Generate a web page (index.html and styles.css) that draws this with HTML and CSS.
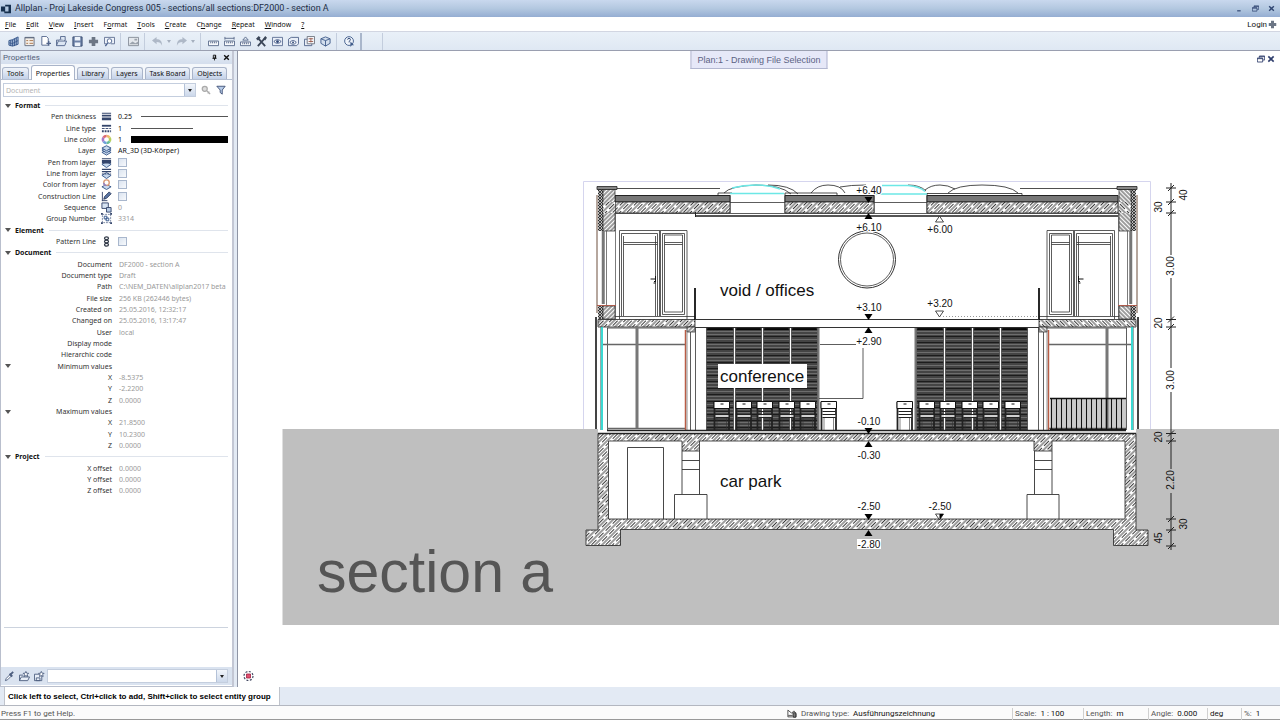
FILE: index.html
```html
<!DOCTYPE html>
<html lang="en">
<head>
<meta charset="utf-8">
<title>Allplan - Proj Lakeside Congress 005</title>
<link rel="stylesheet" href="styles.css">
</head>
<body>
<svg class="defs" aria-hidden="true">
  <symbol id="i-logo" viewBox="0 0 12 12"><path d="M0 3h5v6H0zM5 1h7v10H4V9h5V3H5z" fill="#17304f"/></symbol>
  <symbol id="i-building" viewBox="0 0 12 12"><path d="M1 5l4-1v7l-4-1zM5 4l6-3v8l-6 2M3 4.500V11M7 3v8M9 2v8M1 7.500l4 .5 6-3" fill="#a9bedb" stroke="#34558a"/></symbol>
  <symbol id="i-form" viewBox="0 0 12 12"><path d="M1 1.500h10v9H1z" fill="#f4efe8" stroke="#666f80"/><path d="M1 2h10" stroke="#53607a"/><path d="M2.500 5h2M6 5h4M2.500 8h2M6 8h4" stroke="#a77247"/></symbol>
  <symbol id="i-new" viewBox="0 0 12 12"><path d="M2 .5h5l2 2V10H2z" fill="#fff" stroke="#52658b"/><path d="M7 8h5M9.500 5.500v5" stroke="#52658b" stroke-width="1.500"/></symbol>
  <symbol id="i-open" viewBox="0 0 12 12"><path d="M.5 10.500v-6h3l1-1h5v2" fill="none" stroke="#52658b"/><path d="M.5 10.500l2-5h9l-2 5zM5 3.500v-3h5v4" fill="#dce6f3" stroke="#52658b"/></symbol>
  <symbol id="i-save" viewBox="0 0 12 12"><path d="M1 1h10v10H1z" fill="#6e83a8" stroke="#34496e"/><path d="M3 1h6v4H3zM3 7h6v4H3z" fill="#edf3fa"/></symbol>
  <symbol id="i-plus" viewBox="0 0 12 12"><path d="M4 1h4v3h3v4H8v3H4V8H1V4h3z" fill="#6c7685"/></symbol>
  <symbol id="i-preview" viewBox="0 0 12 12"><path d="M2.500 8.500H.5v-7h11v7h-4" fill="#eef3fa" stroke="#617294"/><circle cx="6" cy="5.500" r="2.500" fill="#fff" stroke="#4b628e"/><path d="M4 7.500L1.500 11" stroke="#4b628e" stroke-width="1.500"/></symbol>
  <symbol id="i-image" viewBox="0 0 12 12"><path d="M.5 1.500h11v9H.5z" fill="#e4e8ed" stroke="#858d98"/><path d="M1 9l4-3 3 2 3-2v3H1zM7 3h3v2H7z" fill="#9ba3ad"/></symbol>
  <symbol id="i-undo" viewBox="0 0 12 12"><path d="M0 5l5-4v2.500c4 0 6 2 6 7-1-3-3-4-6-4V9z" fill="#aeb8c7"/></symbol>
  <symbol id="i-redo" viewBox="0 0 12 12"><path d="M12 5L7 1v2.500c-4 0-6 2-6 7 1-3 3-4 6-4V9z" fill="#aeb8c7"/></symbol>
  <symbol id="i-ruler" viewBox="0 0 12 12"><path d="M.5 5.500h11v5H.5z" fill="#f7f9fc" stroke="#59698a"/><path d="M3 6v2M5 6v2M7 6v2M9 6v2" stroke="#59698a"/></symbol>
  <symbol id="i-measure" viewBox="0 0 12 12"><path d="M.5 5.500h11v5H.5z" fill="#f7f9fc" stroke="#59698a"/><path d="M3 6v2M5 6v2M7 6v2M9 6v2M1 2.500h10M1 1v3M11 1v3" stroke="#59698a"/></symbol>
  <symbol id="i-area" viewBox="0 0 12 12"><path d="M.5 6.500h11v4H.5z" fill="#f7f9fc" stroke="#59698a"/><path d="M3 7v2M5 7v2M7 7v2M9 7v2M3 4.500L6 1l3 3.500z" fill="none" stroke="#59698a"/></symbol>
  <symbol id="i-tools" viewBox="0 0 12 12"><path d="M2 2l8 9M10 2l-8 9" stroke="#3b4658" stroke-width="2"/><path d="M0 3l3-3 2 2-3 3zM8 3l2-3 2 2-2 3z" fill="#3b4658"/></symbol>
  <symbol id="i-eye" viewBox="0 0 12 12"><path d="M.5 1.500h11v9H.5z" fill="#e8eef7" stroke="#5e7195"/><path d="M2 6q4-4 8 0-4 4-8 0z" fill="#fff" stroke="#3f5684"/><circle cx="6" cy="6" r="1.500" fill="#2d4676"/></symbol>
  <symbol id="i-eyefolder" viewBox="0 0 12 12"><path d="M.5 10.500v-7l3-2h8v7l-2 2z" fill="#e8eef7" stroke="#52658b"/><path d="M2 7q3.500-4 7 0-3.500 4-7 0z" fill="#fff" stroke="#3f5684"/><circle cx="5.500" cy="7" r="1" fill="#2d4676"/></symbol>
  <symbol id="i-windows" viewBox="0 0 12 12"><path d="M.5 3.500h8v7h-8z" fill="#e8eef7" stroke="#52658b"/><path d="M3.500.5h8v8h-8z" fill="#f5f7fb" stroke="#70757f"/><path d="M5 3h5M5 6h5M7.500 2v5" stroke="#9a5e50"/></symbol>
  <symbol id="i-cube" viewBox="0 0 12 12"><path d="M1 3l5-2 5 2v5l-5 3-5-3z" fill="#d2deed" stroke="#405c8b"/><path d="M1 3l5 2 5-2M6 5v6" fill="none" stroke="#405c8b"/></symbol>
  <symbol id="i-help" viewBox="0 0 12 12"><circle cx="5.500" cy="5.500" r="4.800" fill="#eef3fa" stroke="#405c8b"/><path d="M4 4q0-1.500 1.500-1.500T7 4q0 1-1.500 2v1" fill="none" stroke="#26406f"/><path d="M7 6l4 4H8.500L7 12z" fill="#405c8b"/></symbol>
  <symbol id="i-pen" viewBox="0 0 12 12"><path d="M1 2h10v1H1zM1 4h10v2H1zM1 7h10v3H1z" fill="#34456b"/></symbol>
  <symbol id="i-linetype" viewBox="0 0 12 12"><path d="M1 2h10v2H1z" fill="#34456b"/><path d="M1 6h10" stroke="#34456b" stroke-dasharray="3 1"/><path d="M1 9h10" stroke="#34456b" stroke-width="2" stroke-dasharray="2 1"/></symbol>
  <symbol id="i-wheel" viewBox="0 0 12 12"><g fill="none" stroke-width="3.500"><path d="M6 2.500A3.500 3.500 0 0 1 9 4.200" stroke="#efb96a"/><path d="M9 4.200A3.500 3.500 0 0 1 9 7.800" stroke="#b8d15f"/><path d="M9 7.800A3.500 3.500 0 0 1 6 9.500" stroke="#68bd9b"/><path d="M6 9.500A3.500 3.500 0 0 1 3 7.800" stroke="#6e9edb"/><path d="M3 7.800A3.500 3.500 0 0 1 3 4.200" stroke="#a77bc9"/><path d="M3 4.200A3.500 3.500 0 0 1 6 2.500" stroke="#dc6a73"/></g><circle cx="6" cy="6" r="2.500" fill="#fff"/></symbol>
  <symbol id="i-layers" viewBox="0 0 12 12"><g fill="#c7d8ed" stroke="#34558a"><path d="M6 5.500l5 2.500-5 3-5-3z"/><path d="M6 3l5 2.500-5 3-5-3z"/><path d="M6 .8l5 2.500-5 3-5-3z"/></g></symbol>
  <symbol id="i-penlayer" viewBox="0 0 12 12"><path d="M6 5l5 3-5 3.500L1 8z" fill="#c7d8ed" stroke="#34558a"/><path d="M1 1h10v1H1zM1 3h10v4H1z" fill="#34456b"/></symbol>
  <symbol id="i-linelayer" viewBox="0 0 12 12"><path d="M6 5l5 3-5 3.500L1 8z" fill="#c7d8ed" stroke="#34558a"/><path d="M1 1.500h10M1 4h10" stroke="#34456b" stroke-width="1.500"/><path d="M1 6.500h10" stroke="#34456b" stroke-dasharray="2 1"/></symbol>
  <symbol id="i-colorlayer" viewBox="0 0 12 12"><path d="M6 6l5 2.500-5 3-5-3z" fill="#c7d8ed" stroke="#34558a"/><circle cx="6" cy="4" r="3" fill="#fff" stroke="#d99a76" stroke-width="1.500"/><path d="M3 4a3 3 0 0 0 3 3" fill="none" stroke="#8d82c6" stroke-width="1.500"/></symbol>
  <symbol id="i-pencil" viewBox="0 0 12 12"><path d="M1.500 1v10M1 10.500h6" stroke="#34456b"/><path d="M3 9l1-3 5-5 2 2-5 5z" fill="#5c77a6" stroke="#26375b"/></symbol>
  <symbol id="i-sequence" viewBox="0 0 12 12"><path d="M1 1h7v6H1z" fill="#d6e3f2" stroke="#34456b"/><path d="M6 6h5v5H6z" fill="#b7cbe5" stroke="#34456b"/></symbol>
  <symbol id="i-group" viewBox="0 0 12 12"><path d="M1.500 1.500h9v9h-9z" fill="none" stroke="#7482a0" stroke-dasharray="2 1"/><path d="M3.500 3.500h3v3h-3zM5.500 5.500h3v3h-3z" fill="#eef3fa" stroke="#34558a"/><path d="M0 0h2v2H0zM10 0h2v2h-2zM0 10h2v2H0zM10 10h2v2h-2z" fill="#34456b"/></symbol>
  <symbol id="i-chain" viewBox="0 0 12 12"><g fill="none" stroke="#333b49" stroke-width="1.300"><ellipse cx="6" cy="2.500" rx="2.200" ry="1.500"/><ellipse cx="6" cy="6" rx="2.200" ry="1.500"/><ellipse cx="6" cy="9.500" rx="2.200" ry="1.500"/></g></symbol>
  <symbol id="i-key" viewBox="0 0 12 12"><circle cx="4.500" cy="4.500" r="3" fill="#ddd" stroke="#aaa" stroke-width="1.500"/><path d="M6.500 6.500L11 11M8 10l2-2" stroke="#aaa" stroke-width="1.500"/></symbol>
  <symbol id="i-filter" viewBox="0 0 12 12"><path d="M1 1.500h10L7.500 6v5L5 9V6z" fill="#b6cbe8" stroke="#34456b"/></symbol>
  <symbol id="i-pipette" viewBox="0 0 12 12"><path d="M1.500 10.500l1-2.500 4-4 1.500 1.500-4 4z" fill="#fff" stroke="#4e5f80"/><path d="M6 3l3 3M7 4l3-3" stroke="#4e5f80" stroke-width="2"/></symbol>
  <symbol id="i-favopen" viewBox="0 0 12 12"><path d="M.5 10.500v-6h4M.5 10.500l2-4h9l-2 4z" fill="#e8eef7" stroke="#4e5f80"/><path d="M7.500.5l1 2h2L9 4l.5 2-2-1-2 1L6 4 4.500 2.500h2z" fill="#fff" stroke="#4e5f80"/></symbol>
  <symbol id="i-favsave" viewBox="0 0 12 12"><path d="M.5 3.500h8v7h-8zM2.500 7.500h4v3h-4z" fill="#e8eef7" stroke="#4e5f80"/><path d="M8 .5l1 2h2L9.500 4l.5 2-2-1-2 1 .5-2L5 2.500h2z" fill="#fff" stroke="#4e5f80"/></symbol>
  <symbol id="i-pin" viewBox="0 0 12 12"><path d="M4 2h4v5H4zM2.500 7.500h7M6 7v4" fill="none" stroke="#111" stroke-width="1.500"/><path d="M6.500 2h2v5h-2z" fill="#111"/></symbol>
  <symbol id="i-close" viewBox="0 0 12 12"><path d="M2 2l8 8M10 2l-8 8" stroke="currentColor" stroke-width="2.400"/></symbol>
  <symbol id="i-restore" viewBox="0 0 12 12"><path d="M3.500 4V1.500h8v6H9M.5 4.500h8v6h-8zM.5 5.500h8M3.500 2.500h8" fill="none" stroke="currentColor" stroke-width="1.300"/></symbol>
  <symbol id="i-min" viewBox="0 0 12 12"><path d="M2 9h6v2H2z" fill="currentColor"/></symbol>
  <symbol id="i-sheet" viewBox="0 0 12 12"><path d="M.5 10.500v-9l5 4 3-3 3 4v4z" fill="#fff" stroke="#222"/><path d="M1 8.500h6M7 5h4v6H8z" fill="#777" stroke="#222"/></symbol>
</svg>

<header>
  <div class="titlebar">
    <svg class="logo"><use href="#i-logo"/></svg>
    <h1>Allplan - Proj Lakeside Congress 005 - sections/all sections:DF2000 - section A</h1>
    <div class="winbtns">
      <button aria-label="Minimize"><svg><use href="#i-min"/></svg></button>
      <button aria-label="Restore"><svg><use href="#i-restore"/></svg></button>
      <button aria-label="Close"><svg><use href="#i-close"/></svg></button>
    </div>
  </div>
  <nav class="menubar">
    <button><u>F</u>ile</button><button><u>E</u>dit</button><button><u>V</u>iew</button><button><u>I</u>nsert</button><button>F<u>o</u>rmat</button><button><u>T</u>ools</button><button><u>C</u>reate</button><button>C<u>h</u>ange</button><button><u>R</u>epeat</button><button><u>W</u>indow</button><button><u>?</u></button>
    <button class="login">Login <svg><use href="#i-plus"/></svg></button>
  </nav>
  <div class="toolbar" role="toolbar">
    <button aria-label="Project"><svg><use href="#i-building"/></svg></button>
    <button aria-label="Drawing files"><svg><use href="#i-form"/></svg></button>
    <button aria-label="New"><svg><use href="#i-new"/></svg></button>
    <button aria-label="Open"><svg><use href="#i-open"/></svg></button>
    <button aria-label="Save"><svg><use href="#i-save"/></svg></button>
    <button aria-label="Add"><svg><use href="#i-plus"/></svg></button>
    <button aria-label="Preview"><svg><use href="#i-preview"/></svg></button>
    <i class="sep"></i>
    <button aria-label="Image"><svg><use href="#i-image"/></svg></button>
    <i class="sep"></i>
    <button aria-label="Undo"><svg><use href="#i-undo"/></svg></button>
    <button class="caret pale" aria-label="Undo list"></button>
    <button aria-label="Redo"><svg><use href="#i-redo"/></svg></button>
    <button class="caret pale" aria-label="Redo list"></button>
    <i class="sep"></i>
    <button aria-label="Ruler"><svg><use href="#i-ruler"/></svg></button>
    <button aria-label="Measure"><svg><use href="#i-measure"/></svg></button>
    <button aria-label="Area"><svg><use href="#i-area"/></svg></button>
    <button aria-label="Tools"><svg><use href="#i-tools"/></svg></button>
    <button aria-label="Show"><svg><use href="#i-eye"/></svg></button>
    <button aria-label="Show files"><svg><use href="#i-eyefolder"/></svg></button>
    <button aria-label="Windows"><svg><use href="#i-windows"/></svg></button>
    <button aria-label="3D view"><svg><use href="#i-cube"/></svg></button>
    <i class="sep"></i>
    <button aria-label="Help"><svg><use href="#i-help"/></svg></button>
    <i class="sep grip"></i><i class="sep last"></i>
  </div>
</header>

<main>
  <aside>
    <div class="panel-head"><h2>Properties</h2>
      <button aria-label="Pin"><svg><use href="#i-pin"/></svg></button>
      <button aria-label="Close panel"><svg><use href="#i-close"/></svg></button>
    </div>
    <div class="tabs" role="tablist">
      <button role="tab">Tools</button><button role="tab" class="on" aria-selected="true">Properties</button><button role="tab">Library</button><button role="tab">Layers</button><button role="tab">Task Board</button><button role="tab">Objects</button>
    </div>
    <div class="filter">
      <div class="combo"><input type="text" aria-label="Element type" placeholder="Document"><button class="caret" aria-label="Show types"></button></div>
      <button aria-label="Match"><svg><use href="#i-key"/></svg></button>
      <button aria-label="Filter"><svg><use href="#i-filter"/></svg></button>
    </div>
    <div class="props">
      <h3>Format</h3>
      <div class="row"><span>Pen thickness</span><svg><use href="#i-pen"/></svg><b class="line-v">0.25<i class="ln"></i></b></div>
      <div class="row"><span>Line type</span><svg><use href="#i-linetype"/></svg><b class="line-v">1<i class="ln short"></i></b></div>
      <div class="row"><span>Line color</span><svg><use href="#i-wheel"/></svg><b class="line-v">1<i class="ln swatch"></i></b></div>
      <div class="row"><span>Layer</span><svg><use href="#i-layers"/></svg><b>AR_3D (3D-Körper)</b></div>
      <div class="row"><label for="c1">Pen from layer</label><svg><use href="#i-penlayer"/></svg><input type="checkbox" id="c1"></div>
      <div class="row"><label for="c2">Line from layer</label><svg><use href="#i-linelayer"/></svg><input type="checkbox" id="c2"></div>
      <div class="row"><label for="c3">Color from layer</label><svg><use href="#i-colorlayer"/></svg><input type="checkbox" id="c3"></div>
      <div class="row"><label for="c4">Construction Line</label><svg><use href="#i-pencil"/></svg><input type="checkbox" id="c4"></div>
      <div class="row"><span>Sequence</span><svg><use href="#i-sequence"/></svg><em>0</em></div>
      <div class="row"><span>Group Number</span><svg><use href="#i-group"/></svg><em>3314</em></div>
      <h3>Element</h3>
      <div class="row"><label for="c5">Pattern Line</label><svg><use href="#i-chain"/></svg><input type="checkbox" id="c5"></div>
      <h3>Document</h3>
      <div class="row wide"><span>Document</span><em>DF2000 - section A</em></div>
      <div class="row wide"><span>Document type</span><em>Draft</em></div>
      <div class="row wide"><span>Path</span><em>C:\NEM_DATEN\allplan2017 beta</em></div>
      <div class="row wide"><span>File size</span><em>256 KB (262446 bytes)</em></div>
      <div class="row wide"><span>Created on</span><em>25.05.2016, 12:32:17</em></div>
      <div class="row wide"><span>Changed on</span><em>25.05.2016, 13:17:47</em></div>
      <div class="row wide"><span>User</span><em>local</em></div>
      <div class="row wide"><span>Display mode</span></div>
      <div class="row wide"><span>Hierarchic code</span></div>
      <div class="row wide open"><span>Minimum values</span></div>
      <div class="row wide"><span>X</span><em>-8.5375</em></div>
      <div class="row wide"><span>Y</span><em>-2.2200</em></div>
      <div class="row wide"><span>Z</span><em>0.0000</em></div>
      <div class="row wide open"><span>Maximum values</span></div>
      <div class="row wide"><span>X</span><em>21.8500</em></div>
      <div class="row wide"><span>Y</span><em>10.2300</em></div>
      <div class="row wide"><span>Z</span><em>0.0000</em></div>
      <h3>Project</h3>
      <div class="row wide"><span>X offset</span><em>0.0000</em></div>
      <div class="row wide"><span>Y offset</span><em>0.0000</em></div>
      <div class="row wide"><span>Z offset</span><em>0.0000</em></div>
    </div>
    <div class="note"></div>
    <div class="favs">
      <button aria-label="Pick up"><svg><use href="#i-pipette"/></svg></button>
      <button aria-label="Load favorite"><svg><use href="#i-favopen"/></svg></button>
      <button aria-label="Save favorite"><svg><use href="#i-favsave"/></svg></button>
      <div class="combo"><input type="text" aria-label="Favorite"><button class="caret" aria-label="Show favorites"></button></div>
    </div>
  </aside>

  <section class="view">
    <svg class="plan" viewBox="238 51 1042 636" role="img" aria-label="Section A">
      <defs>
        <pattern id="hatch" width="5" height="10" patternUnits="userSpaceOnUse" patternTransform="rotate(45)">
          <rect width="5" height="10" fill="#fff"/><path d="M1 0v10M3.500 0v7" stroke="#222" stroke-width=".9"/>
        </pattern>
        <pattern id="wallhatch" width="3" height="3" patternUnits="userSpaceOnUse" patternTransform="rotate(45)">
          <rect width="3" height="3" fill="#fff"/><path d="M1 0v3" stroke="#222" stroke-width=".9"/>
        </pattern>
        <pattern id="insul" width="3" height="3" patternUnits="userSpaceOnUse">
          <rect width="3" height="3" fill="#bbb"/><path d="M0 0l3 3M3 0L0 3" stroke="#222" stroke-width=".8"/>
        </pattern>
        <pattern id="louver" width="30" height="13" patternUnits="userSpaceOnUse">
          <rect width="30" height="13" fill="#444"/><path d="M0 1.500h30M0 8.500h30" stroke="#1c1c1c"/><path d="M0 3.500h30M0 6.500h30M0 11.500h30" stroke="#777" stroke-width=".8"/>
        </pattern>
        <pattern id="bars" x="1050" width="5" height="32" patternUnits="userSpaceOnUse"><path d="M1.500 0v32" stroke="#111" stroke-width="1.500"/><path d="M4 0v32" stroke="#666" stroke-width=".7"/></pattern>
        <g id="chair"><path d="M1.500 1v29M16 1v29" stroke="#222" stroke-width="1.800"/><path d="M1 .5h15.500v7H1z" fill="#fff" stroke="#111"/><path d="M7.500 3h3" stroke="#111"/><path d="M2.500 10.500h13" stroke="#222"/><path d="M2.500 15h13" stroke="#fff" stroke-width="1.500"/><path d="M2.500 13.500h13M2.500 16.500h13" stroke="#222"/><path d="M4 17v12M13.500 17v12" stroke="#333" stroke-width=".6"/></g>
        <g id="down"><path d="M-4 0h8l-4 6z"/></g>
        <g id="up"><path d="M-4 6h8L0 0z"/></g>
        <g id="tick"><path d="M-5 0H5M-3 3L3-3" stroke="#222"/></g>
        <g id="panels"><path d="M0 0h27v102H0zM29 0h26v102H29zM57 0h26v102H57zM85 0h26v102H85z" fill="url(#louver)" stroke="#222" stroke-width=".6"/><path d="M1 1h25M30 1h24M58 1h24M86 1h24" stroke="#000" stroke-width="1.500"/></g>
        <g id="wing">
          <path d="M583.500 429V181.500H868" fill="none" stroke="#d5d5ee"/>
          <path d="M597 195v118" stroke="#b6a79e" stroke-width="2"/>
          <path d="M598 189h5v42h-5zM598 306h5v13h-5z" fill="url(#insul)"/>
          <path d="M603 189h12v42h-12zM603 306h12v13h-12z" fill="url(#wallhatch)" stroke="#222" stroke-width=".7"/>
          <path d="M597 186.500h20v3h-20z" fill="#888" stroke="#222" stroke-width=".8"/>
          <path d="M603 202h12v11h-12z" fill="url(#hatch)"/>
          <path d="M602.500 231v73M604 231v73" stroke="#777" stroke-width="1.500"/>
          <path d="M606.500 231v75M615.500 213v106" stroke="#444" stroke-width=".7"/>
          <path d="M597 305.500h19" stroke="#ad5b4c"/>
          <g fill="none" stroke="#333" stroke-width=".8">
            <path d="M619.500 319V230.500h67.500V319M615 316.500h80M621.500 316V233.500h36V316M623.500 242.500h34M623.500 244.500h34M623.500 236v80M655.500 236v80M659.500 231v85M660.500 231v85M662.500 233.500h22v81h-22zM664.500 235h18v77h-18zM664.500 242.500h18M664.500 244.500h18"/>
          </g>
          <path d="M650.500 279h5M654 281.500h2M653.500 283h2M655.500 276v6" stroke="#111"/>
          <path d="M598 319.500h97v7.500h-97z" fill="url(#hatch)" stroke="#222" stroke-width=".8"/>
          <path d="M687 327h8v5h-8z" fill="url(#wallhatch)" stroke="#222" stroke-width=".7"/>
          <path d="M695 288v32" stroke="#111" stroke-width="1.800"/>
          <path d="M596 317v112" stroke="#444" stroke-width="2"/>
          <path d="M695.500 327v103M607.500 328v102M607 328h80M690.500 332v98" stroke="#333" stroke-width=".8"/>
          <path d="M603 344.500h82M607 428.500h78" stroke="#666" stroke-width="1.500"/>
          <path d="M602 327v103" stroke="#25d5cf" stroke-width="1.800"/><path d="M600.500 327v103" stroke="#54706f" stroke-width=".6"/>
          <path d="M685.500 330v100" stroke="#b85c45" stroke-width="1.500"/><path d="M687 330v100" stroke="#777" stroke-width=".8"/>
        </g>
      </defs>

      <path d="M282.500 429H1279v196H282.500z" fill="#bfbfbf"/>
      <path d="M598 427h538v103H598zM598 188h538v242H598z" fill="#fff"/>

      <g fill="none" stroke="#222" stroke-width=".8">
        <path d="M617 188.500h103M1020 188.500h98"/>
        <path d="M718 195v-2h14M785 193h52v2M927 193.500h95v2"/>
        <path d="M724 193q6-7 32-8 25 0 35 9M768 185q22 0 30 9M811 193q6-8 17-8 13 0 17 8M840 187q10-2 26-2M908 185q12 0 18 6M925 190q6-5 15-5 8 0 15 4M948 193q8-8 34-8 28 0 36 8"/>
        <path d="M730 195v18M785 193v20M874 195v18M927 193v20"/>
      </g>
      <path d="M730 193.500h54M732 188q12-3 24-3 14 0 24 4M874 194h53M882 185.500h26q12 1 17 6" fill="none" stroke="#6ce8e6" stroke-width="1.500"/>
      <path d="M615 195.500h115v6.500H615zM785 195.500h89v6.500h-89zM927 195.500h191v6.500H927z" fill="#777" stroke="#222"/>
      <path d="M615 202h115v11H615zM785 202h89v11h-89zM927 202h191v11H927z" fill="url(#hatch)" stroke="#222" stroke-width=".8"/>
      <path d="M615 213.500h504M730 202.500h55M874 202.500h53" stroke="#333" stroke-width=".8"/>
      <path d="M695 216h423" stroke="#555" stroke-width="1.800"/><path d="M695.500 212v5" stroke="#222"/>

      <use href="#wing"/>
      <use href="#wing" transform="translate(1734) scale(-1 1)"/>
      <path d="M637 328v100M1107 328v100" stroke="#777" stroke-width="3"/>
      <path d="M695 319.500h344M695 327.500h344" stroke="#333"/>
      <path d="M943 316.500h94" stroke="#999" stroke-dasharray="1 2"/>
      <circle cx="867" cy="259.500" r="28.500" fill="none" stroke="#333"/><circle cx="867" cy="259.500" r="26.500" fill="none" stroke="#333" stroke-width=".8"/>

      <use href="#panels" x="706.500" y="328"/><use href="#panels" x="916.500" y="328"/>
      <path d="M818.500 328v102M915.500 328v102" stroke="#777" stroke-width="2"/>
      <path d="M820 344.500h36M863 348v50.500h-44" fill="none" stroke="#333" stroke-width=".8"/>
      <use href="#chair" x="713" y="401"/><use href="#chair" x="735" y="401"/><use href="#chair" x="756" y="401"/><use href="#chair" x="778" y="401"/><use href="#chair" x="799" y="401"/><use href="#chair" x="820" y="401"/>
      <use href="#chair" x="896" y="401"/><use href="#chair" x="918" y="401"/><use href="#chair" x="939" y="401"/><use href="#chair" x="961" y="401"/><use href="#chair" x="982" y="401"/><use href="#chair" x="1004" y="401"/>
      <path d="M1050 398h76v32h-76z" fill="url(#bars)"/><path d="M1050 398.500h76M1050 429.500h76" stroke="#111" stroke-width="1.500"/>

      <path d="M607 430.500h519" stroke="#222" stroke-width="1.500"/>
      <path d="M598 433.500h538V530h12v15.500h-34.500V529.500H620.500v16H586V530h12zM608.500 441v78H1125v-78h-73v10h-18v-10H699.500v10H682v-10z" fill="url(#hatch)" fill-rule="evenodd" stroke="#222" stroke-width=".8"/>
      <path d="M598 433.500h538" stroke="#222" stroke-width="1.500"/>
      <g fill="none" stroke="#333" stroke-width=".9">
        <path d="M627.500 519v-71.500h36V519M682 451v43M699.500 451v43M682 460.500h17.500M682 469.500h17.500M674.500 519v-24.500H707V519M1034.500 451v43M1052 451v43M1034.500 460.500H1052M1034.500 469.500H1052M1027 519v-24.500h32V519"/>
      </g>

      <path d="M1171 183v72M1171 278v90M1171 392v77M1171 493v57" stroke="#222"/>
      <use href="#tick" x="1171" y="188"/><use href="#tick" x="1171" y="202"/><use href="#tick" x="1171" y="213"/><use href="#tick" x="1171" y="319.500"/><use href="#tick" x="1171" y="327"/><use href="#tick" x="1171" y="433.500"/><use href="#tick" x="1171" y="441"/><use href="#tick" x="1171" y="519"/><use href="#tick" x="1171" y="530"/><use href="#tick" x="1171" y="546"/>
      <g class="dim">
        <text transform="translate(1187 195) rotate(-90)">40</text><text transform="translate(1162 207) rotate(-90)">30</text>
        <text transform="translate(1174 266) rotate(-90)">3.00</text><text transform="translate(1162 323) rotate(-90)">20</text>
        <text transform="translate(1174 380) rotate(-90)">3.00</text><text transform="translate(1162 437) rotate(-90)">20</text>
        <text transform="translate(1174 480) rotate(-90)">2.20</text><text transform="translate(1187 524) rotate(-90)">30</text>
        <text transform="translate(1162 538) rotate(-90)">45</text>
      </g>

      <path d="M857 539h24v10h-24z" fill="#fff"/>
      <g class="dim halo">
        <text x="869" y="194">+6.40</text><text x="869" y="231">+6.10</text><text x="869" y="311">+3.10</text><text x="869" y="345">+2.90</text>
        <text x="869" y="425">-0.10</text><text x="869" y="459">-0.30</text><text x="869" y="510">-2.50</text><text x="869" y="548">-2.80</text>
        <text x="940" y="233">+6.00</text><text x="940" y="307">+3.20</text><text x="940" y="510">-2.50</text>
      </g>
      <use href="#down" x="868.500" y="197"/><use href="#up" x="868.500" y="213"/><use href="#down" x="868.500" y="314"/><use href="#up" x="868.500" y="327"/>
      <use href="#down" x="868.500" y="428"/><use href="#up" x="868.500" y="441"/><use href="#down" x="868.500" y="514"/><use href="#up" x="868.500" y="530"/>
      <g fill="#fff" stroke="#222" stroke-width=".8"><use href="#up" x="939.500" y="216"/><use href="#down" x="939.500" y="311"/><use href="#down" x="939.500" y="514"/></g>
      <path d="M939.500 514h4l-4 6z"/>

      <path d="M718 364h89v24h-89z" fill="#fff"/>
      <g class="room"><text x="720" y="296">void / offices</text><text x="720" y="382">conference</text><text x="720" y="487">car park</text></g>
      <text class="name" x="317" y="592">section a</text>

      <circle cx="248.500" cy="676" r="4.500" fill="none" stroke="#444a63" stroke-width="1.200" stroke-dasharray="2 1.500"/><path d="M246.500 674h4v4h-4z" fill="#e05070" stroke="#a02040" stroke-width=".8"/>
    </svg>
    <div class="doc-title">Plan:1 - Drawing File Selection</div>
    <div class="doc-btns">
      <button aria-label="Restore drawing"><svg><use href="#i-restore"/></svg></button>
      <button aria-label="Close drawing"><svg><use href="#i-close"/></svg></button>
    </div>
  </section>
</main>

<footer>
  <div class="prompt"><p>Click left to select, Ctrl+click to add, Shift+click to select entity group</p></div>
  <div class="status">
    <span class="grow">Press F1 to get Help.</span>
    <span class="cell type"><svg><use href="#i-sheet"/></svg>Drawing type: <b>Ausführungszeichnung</b></span>
    <span class="cell scale">Scale: <b>1 : 100</b></span>
    <span class="cell length">Length: <b>m</b></span>
    <span class="cell angle">Angle: <b>0.000</b></span>
    <span class="cell unit"><b>deg</b></span>
    <span class="cell pct">%: <b>1</b></span>
  </div>
</footer>
</body>
</html>
```
FILE: styles.css
```css
* { box-sizing: border-box; margin: 0; padding: 0; }
body {
  display: flex; flex-direction: column; height: 100vh; overflow: hidden;
  font: 7px/11px "Noto Sans", "Open Sans", sans-serif; color: #111; background: #fff;
}
button { font: inherit; color: inherit; background: none; border: 0; display: flex; align-items: center; justify-content: center; white-space: nowrap; }
b, em { font-weight: normal; font-style: normal; }
.defs { display: none; }

.titlebar {
  display: flex; align-items: center; gap: 3px; height: 17px; padding-right: 3px;
  background: linear-gradient(#c9d8ee, #b3c8e0 50%, #95add2);
}
.titlebar h1 { flex: 1; font: 9px/11px Roboto, "Noto Sans", sans-serif; color: #1d2c44; }
.logo { width: 12px; height: 10px; }
.winbtns { display: flex; gap: 4px; color: #2f4571; }
.winbtns button { width: 12px; height: 12px; }
.winbtns svg { width: 7px; height: 7px; }

.menubar { display: flex; align-items: center; gap: 10px; height: 14px; padding: 0 3px 0 5px; }
.login { margin-left: auto; gap: 1px; font: 8px/11px Roboto, "Noto Sans", sans-serif; }
.login svg { width: 9px; height: 11px; }

.toolbar {
  display: flex; align-items: center; height: 20px; padding-left: 5px;
  background: linear-gradient(#e9f0f8, #dfe8f3); border-top: 1px solid #d2d6e2; border-bottom: 1px solid #9a9fb0;
}
.toolbar button { width: 16px; height: 16px; }
.toolbar svg { width: 11px; height: 11px; }
.toolbar .caret { width: 8px; }
.sep { width: 1px; height: 17px; margin: 0 4px 0 3px; background: #c3cddd; }
.grip { width: 2px; background: #a9b6cb; }
.last { margin-left: 16px; }
.caret::after { content: ""; border: 2px solid transparent; border-top: 3px solid #222; border-bottom: 0; }
.pale::after { border-top-color: #a5afbe; }

main { flex: 1; display: flex; min-height: 0; background: #e3eaf4; }
aside {
  display: flex; flex-direction: column; width: 234px; background: #fff;
  border: 1px solid #b9bfcd; border-top: 0; border-right: 2px solid #c3c7d4;
}
.panel-head { display: flex; align-items: center; height: 13px; padding: 0 0 0 2px; background: linear-gradient(#e6edf6, #d4deed); }
.panel-head h2 { flex: 1; font: 8px/11px Roboto, "Noto Sans", sans-serif; color: #56617a; }
.panel-head button { width: 12px; }
.panel-head svg { width: 7px; height: 7px; }

.tabs { display: flex; gap: 2px; align-items: flex-end; height: 16px; padding: 0 5px 0 1px; background: #f4f7fb; border-bottom: 1px solid #b4bfd2; }
.tabs button {
  flex: 1 1 auto; height: 12px; border: 1px solid #a9b4c9; border-bottom: 0; border-radius: 3px 3px 0 0;
  background: linear-gradient(#f0f4fa, #c3d1e8);
}
.tabs .on { height: 15px; margin-bottom: -1px; background: #fff; }

.filter { display: flex; align-items: center; gap: 3px; padding: 3px 5px 3px 2px; }
.filter button { width: 12px; }
.filter svg { width: 10px; height: 10px; }
.combo { flex: 1; display: flex; height: 14px; border: 1px solid #c4cede; background: #fff; }
.combo input { flex: 1; min-width: 0; border: 0; padding: 0 2px; font: inherit; background: none; }
.combo input::placeholder { color: #b4b4b4; opacity: 1; }
.combo .caret { width: 11px; border-left: 1px solid #b4c2d8; background: linear-gradient(#f2f6fb, #ccd8ea); }
.filter .combo { margin-right: 1px; }

.props > * { height: 11px; }
.props > :nth-child(3n) { height: 12px; }
.props h3 { display: flex; align-items: center; gap: 5px; padding: 0 4px; font-size: 7px; font-weight: bold; }
.props h3::before, .open::before { content: ""; border: 3px solid transparent; border-top: 4px solid #555; border-bottom: 0; }
.props h3::before { margin-right: -1px; }
.props h3::after { content: ""; flex: 1; height: 1px; background: #dfe4ec; }
.row { position: relative; display: grid; grid-template-columns: 95px 10px 1fr; column-gap: 5px; align-items: center; white-space: nowrap; padding-right: 4px; }
.row span, .row label { text-align: right; color: #333; }
.row svg { width: 11px; height: 11px; }
.row b, .row em, .row input { margin-left: 2px; }
.row em { color: #999; }
.wide { grid-template-columns: 111px 1fr; }
.open::before { position: absolute; left: 4px; top: 4px; }
.line-v { display: flex; align-items: center; gap: 9px; }
.ln { flex: 1; height: 1px; background: #555; }
.short { margin-right: 35px; }
.swatch { height: 7px; background: #000; }
.row input {
  appearance: none; width: 9px; height: 9px; border: 1px solid #a9b7cd;
  background: linear-gradient(135deg, #dbe4f0, #f7f9fc);
}

.note { margin: auto 4px 0 3px; height: 40px; border-top: 1px solid #ccd3de; }
.favs { display: flex; align-items: center; height: 18px; padding: 0 4px 0 1px; margin-bottom: 1px; background: #dae3f0; }
.favs > button { width: 15px; }
.favs svg { width: 11px; height: 11px; }

.view { position: relative; flex: 1; min-width: 0; margin-left: 3px; background: #fff; border-left: 1px solid #8f95a5; }
.plan { display: block; width: 100%; height: 100%; }
.plan text { font-family: "Liberation Sans", Arial, sans-serif; fill: #111; }
.plan .dim text { font-size: 10px; text-anchor: middle; }
.plan .halo text { paint-order: stroke; stroke: #fff; stroke-width: 2px; }
.plan .halo text:nth-child(8) { stroke: none; }
.plan .room text { font-size: 17px; }
.plan .name { font-size: 59px; fill: #555; }
.doc-title {
  position: absolute; top: 0; left: 50%; transform: translateX(-50%); white-space: nowrap;
  padding: 3px 6px 2px; font: 9px/12px "Liberation Sans", Arial, sans-serif; color: #5c6384;
  background: #e6e8f8; border: 1px solid #b2b7d0; border-top: 0;
}
.doc-btns { position: absolute; top: 4px; right: 5px; display: flex; gap: 2px; color: #2e3d6c; }
.doc-btns svg { width: 8px; height: 8px; }

.prompt { display: flex; height: 19px; background: #e3eaf4; border-bottom: 1px solid #b3b7c0; }
.prompt p {
  display: flex; align-items: center; padding: 0 8px 0 3px; margin-left: 4px; border: 1px solid #c0c4cc; border-width: 0 1px;
  background: #fff; color: #000; font: bold 8px/11px "Liberation Sans", Arial, sans-serif;
}
.status {
  display: flex; align-items: center; height: 14px; padding: 2px 0 0 1px; font: 8px/11px Roboto, "Noto Sans", sans-serif;
  color: #555; background: #fbfbfb; border-bottom: 1px solid #999; white-space: nowrap;
}
.status b { color: #111; margin-left: 4px; }
.status svg { width: 12px; height: 9px; margin: 0 3px 0 0; }
.grow { flex: 1; }
.cell { display: flex; align-items: center; height: 12px; padding-left: 2px; }
.cell + .cell { border-left: 1px solid #d0d0d0; }
.type { width: 228px; }
.scale { width: 71px; }
.length { width: 65px; }
.angle { width: 59px; }
.unit { width: 34px; }
.pct { width: 39px; }
.unit b { margin-left: 0; }
```
